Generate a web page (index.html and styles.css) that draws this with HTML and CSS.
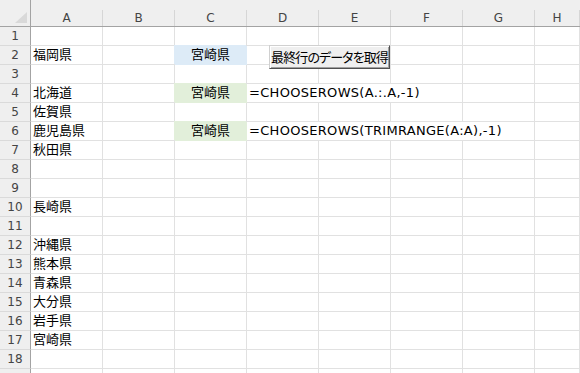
FILE: index.html
```html
<!DOCTYPE html>
<html lang="ja">
<head>
    <meta charset="UTF-8">
    <title>CHOOSEROWS</title>
    <link rel="stylesheet" href="styles.css">
</head>
<body>
    <div class="sheet">
        <div class="row head">
            <div class="corner"><span class="tri"></span></div>
            <div class="col">A</div><div class="col">B</div><div class="col">C</div><div class="col">D</div>
            <div class="col">E</div><div class="col">F</div><div class="col">G</div><div class="col">H</div>
        </div>

        <div class="row"><div class="num">1</div><div></div><div></div><div></div><div></div><div></div><div></div><div></div><div></div></div>
        <div class="row"><div class="num">2</div><div>福岡県</div><div></div><div class="center blue">宮崎県</div><div></div><div></div><div></div><div></div><div></div></div>
        <div class="row"><div class="num">3</div><div></div><div></div><div></div><div></div><div></div><div></div><div></div><div></div></div>
        <div class="row"><div class="num">4</div><div>北海道</div><div></div><div class="center green">宮崎県</div><div class="formula span3">=CHOOSEROWS(A.:.A,-1)</div><div></div><div></div></div>
        <div class="row"><div class="num">5</div><div>佐賀県</div><div></div><div></div><div></div><div></div><div></div><div></div><div></div></div>
        <div class="row"><div class="num">6</div><div>鹿児島県</div><div></div><div class="center green">宮崎県</div><div class="formula span4">=CHOOSEROWS(TRIMRANGE(A:A),-1)</div><div></div></div>
        <div class="row"><div class="num">7</div><div>秋田県</div><div></div><div></div><div></div><div></div><div></div><div></div><div></div></div>
        <div class="row"><div class="num">8</div><div></div><div></div><div></div><div></div><div></div><div></div><div></div><div></div></div>
        <div class="row"><div class="num">9</div><div></div><div></div><div></div><div></div><div></div><div></div><div></div><div></div></div>
        <div class="row"><div class="num">10</div><div>長崎県</div><div></div><div></div><div></div><div></div><div></div><div></div><div></div></div>
        <div class="row"><div class="num">11</div><div></div><div></div><div></div><div></div><div></div><div></div><div></div><div></div></div>
        <div class="row"><div class="num">12</div><div>沖縄県</div><div></div><div></div><div></div><div></div><div></div><div></div><div></div></div>
        <div class="row"><div class="num">13</div><div>熊本県</div><div></div><div></div><div></div><div></div><div></div><div></div><div></div></div>
        <div class="row"><div class="num">14</div><div>青森県</div><div></div><div></div><div></div><div></div><div></div><div></div><div></div></div>
        <div class="row"><div class="num">15</div><div>大分県</div><div></div><div></div><div></div><div></div><div></div><div></div><div></div></div>
        <div class="row"><div class="num">16</div><div>岩手県</div><div></div><div></div><div></div><div></div><div></div><div></div><div></div></div>
        <div class="row"><div class="num">17</div><div>宮崎県</div><div></div><div></div><div></div><div></div><div></div><div></div><div></div></div>
        <div class="row"><div class="num">18</div><div></div><div></div><div></div><div></div><div></div><div></div><div></div><div></div></div>
        <div class="row"><div class="num"></div><div></div><div></div><div></div><div></div><div></div><div></div><div></div><div></div></div>

        <button class="macro-btn">最終行のデータを取得</button>
    </div>
</body>
</html>
```

FILE: styles.css
```css
body {
    margin: 0;
    background-color: #fff;
    font-family: "DejaVu Sans", "Noto Sans CJK JP", sans-serif;
}
.sheet {
    position: relative;
    width: 580px;
    height: 373px;
    overflow: hidden;
}
.row {
    display: grid;
    grid-template-columns: 31px repeat(7, 72px) 1fr;
    height: 19px;
}
.row > div {
    box-sizing: border-box;
    border-right: 1px solid #e1e1e1;
    border-bottom: 1px solid #e1e1e1;
    padding: 0 2px;
    font-size: 13px;
    line-height: 18px;
    white-space: nowrap;
    color: #000;
}

/* column headers */
.head {
    box-sizing: border-box;
    height: 27px;
    background-color: #efefef;
    border-bottom: 1px solid #a3a3a3;
}
.head > .col {
    margin-top: 10px;
    height: 16px;
    border-bottom: none;
    border-right: 1px solid #d6d6d6;
    text-align: center;
    font-size: 12px;
    line-height: 16px;
    color: #444;
}
.head > .corner {
    position: relative;
    border-bottom: none;
    border-right: 1px solid #a3a3a3;
}
.tri {
    position: absolute;
    left: 15px;
    top: 12px;
    width: 0;
    height: 0;
    border-left: 12px solid transparent;
    border-bottom: 11px solid #d9d9d9;
}

/* row headers */
.row > .num {
    background-color: #efefef;
    border-right: 1px solid #a3a3a3;
    border-bottom: 1px solid #dadada;
    text-align: center;
    font-size: 12px;
    color: #444;
    padding: 0;
}

.center { text-align: center; }
.row > .blue {
    background-color: #ddebf7;
    border-color: #ddebf7;
    box-shadow: -1px -1px 0 #ddebf7;
}
.row > .green {
    background-color: #e2efda;
    border-color: #e2efda;
    box-shadow: -1px -1px 0 #e2efda;
}
.formula {
    letter-spacing: 0.3px;
}
.span3 { grid-column: span 3; }
.span4 { grid-column: span 4; }

.macro-btn {
    position: absolute;
    left: 269px;
    top: 45px;
    width: 121px;
    height: 24px;
    padding: 0;
    background-color: #efefef;
    border: 1px solid;
    border-color: #d0d0d0 #505050 #505050 #d0d0d0;
    box-shadow: inset 1px 1px 0 #fff, inset -1px -1px 0 #a0a0a0;
    font-family: "Noto Sans CJK JP", sans-serif;
    font-size: 13px;
    font-feature-settings: "palt";
    letter-spacing: -0.9px;
    white-space: nowrap;
    text-align: center;
    color: #000;
    line-height: 20px;
}
```
